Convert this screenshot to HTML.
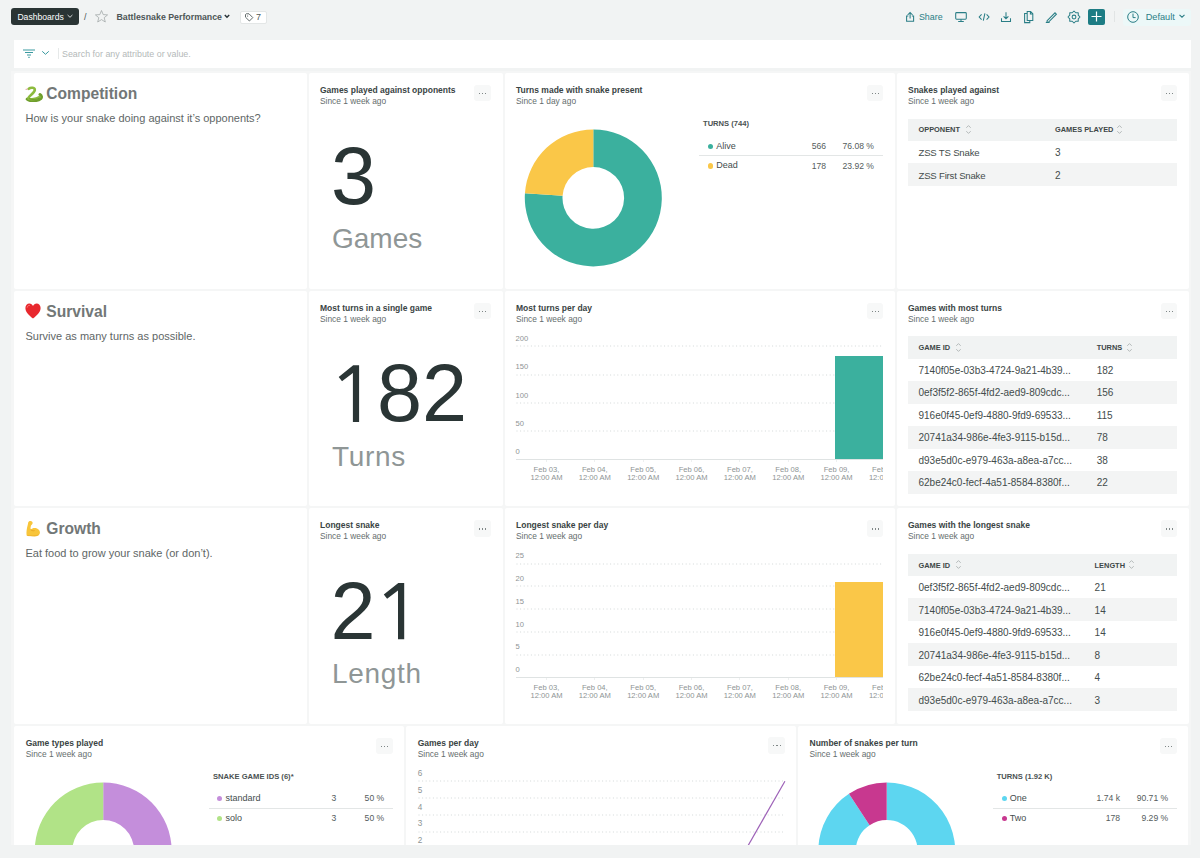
<!DOCTYPE html><html><head><meta charset="utf-8"><style>
html,body{margin:0;padding:0;}
body{width:1200px;height:858px;overflow:hidden;position:relative;background:#f1f3f3;font-family:"Liberation Sans", sans-serif;}
.t{position:absolute;white-space:nowrap;}
.r{position:absolute;}
</style></head><body>
<div class="r" style="left:11.00px;top:8.00px;width:68.00px;height:17.00px;background:#2a3434;border-radius:3px;"></div>
<div class="t" style="left:17.40px;top:12.69px;font-size:8.6px;line-height:8.6px;font-weight:400;color:#ffffff;">Dashboards</div>
<svg class="r" style="left:66px;top:13px;" width="8" height="6" viewBox="0 0 8 6"><path d="M1.6 2 L4 4.3 L6.4 2" fill="none" stroke="#e8eaea" stroke-width="0.9"/></svg>
<div class="t" style="left:84.00px;top:12.85px;font-size:9px;line-height:9px;font-weight:400;color:#4a5454;">/</div>
<svg class="r" style="left:94px;top:9px;" width="15" height="15" viewBox="0 0 15 15"><path d="M7.5 1.5 L9.2 5.6 L13.6 5.9 L10.2 8.7 L11.3 13 L7.5 10.6 L3.7 13 L4.8 8.7 L1.4 5.9 L5.8 5.6 Z" fill="none" stroke="#a3aaaa" stroke-width="0.8"/></svg>
<div class="t" style="left:116.40px;top:12.92px;font-size:8.8px;line-height:8.8px;font-weight:700;color:#4d5656;">Battlesnake Performance</div>
<svg class="r" style="left:223px;top:13px;" width="8" height="6" viewBox="0 0 8 6"><path d="M1.8 2 L4 4.2 L6.2 2" fill="none" stroke="#293338" stroke-width="1.5"/></svg>
<div class="r" style="left:240.00px;top:10.50px;width:27.00px;height:13.00px;background:#ffffff;border:1px solid #e3e6e6;box-sizing:border-box;border-radius:2px;"></div>
<svg class="r" style="left:244px;top:12px;" width="10" height="10" viewBox="0 0 10 10"><path d="M1.5 2.5 V5.2 L5.4 9 L8.8 5.6 L5 1.8 H2.2 Z" fill="none" stroke="#505a5a" stroke-width="0.9"/><circle cx="3.6" cy="4" r="0.6" fill="#505a5a"/></svg>
<div class="t" style="left:256.00px;top:12.85px;font-size:9px;line-height:9px;font-weight:400;color:#505a5a;">7</div>
<svg class="r" style="left:0;top:0" width="1200" height="40" viewBox="0 0 1200 40"><g fill="none" stroke="#2a7e86" stroke-width="1.05">
<path d="M910.1 12.6 V18.4 M907.6 15 L910.1 12.5 L912.6 15"/>
<path d="M908.3 15.9 H906.6 V21.3 H913.6 V15.9 H911.9"/>
<rect x="955.7" y="12.6" width="10.6" height="6.6" rx="0.9"/>
<path d="M961 19.2 V21.2 M958.2 21.4 H963.8"/>
<path d="M981.6 14.4 L979.2 17 L981.6 19.6 M986.6 14.4 L989 17 L986.6 19.6 M984.9 13.4 L983.3 20.6"/>
<path d="M1006 12.3 V18.6 M1003.6 16.3 L1006 18.7 L1008.4 16.3 M1001.5 18.2 V21.4 H1010.5 V18.2"/>
<path d="M1027.2 11.5 H1030.6 L1032.8 13.7 V20.5 H1027.2 Z M1030.4 11.5 V13.9 H1032.8 M1027 13.4 H1024.6 V22.6 H1029.8 V20.6"/>
<path d="M1047.2 20.6 L1055 12.8 L1056.4 14.2 L1048.6 22 L1046.9 22.3 Z"/>
<path d="M1045.8 22.5 H1049.6"/>
<path d="M1074.00 11.00 L1075.76 12.75 L1078.24 12.76 L1078.25 15.24 L1080.00 17.00 L1078.25 18.76 L1078.24 21.24 L1075.76 21.25 L1074.00 23.00 L1072.24 21.25 L1069.76 21.24 L1069.75 18.76 L1068.00 17.00 L1069.75 15.24 L1069.76 12.76 L1072.24 12.75 Z" stroke-linejoin="round"/>
<circle cx="1074" cy="17" r="1.9"/>
</g></svg>
<div class="t" style="left:918.90px;top:12.83px;font-size:8.9px;line-height:8.9px;font-weight:400;color:#2a7e86;">Share</div>
<div class="r" style="left:1088.00px;top:8.50px;width:16.50px;height:16.50px;background:#1d7c84;border-radius:2px;"></div>
<svg class="r" style="left:1088px;top:8px;" width="17" height="17" viewBox="0 0 17 17"><path d="M8.5 3.5 V13.5 M3.5 8.5 H13.5" stroke="#fff" stroke-width="1.2"/></svg>
<div class="r" style="left:1113.50px;top:11.20px;width:1.00px;height:11.20px;background:#e1e4e4;"></div>
<div class="r" style="left:1122.50px;top:8.50px;width:68.00px;height:17.00px;background:#ecf8f8;border-radius:3px;"></div>
<svg class="r" style="left:1126px;top:10px;" width="14" height="14" viewBox="0 0 14 14"><circle cx="7" cy="7" r="5.3" fill="none" stroke="#2a7e86" stroke-width="1"/><path d="M7 3.6 V7.6 H9.6" fill="none" stroke="#2a7e86" stroke-width="1"/></svg>
<div class="t" style="left:1145.70px;top:13.08px;font-size:9.2px;line-height:9.2px;font-weight:400;color:#2a7e86;">Default</div>
<svg class="r" style="left:1178px;top:13px;" width="8" height="6" viewBox="0 0 8 6"><path d="M1.5 1.8 L4 4.2 L6.5 1.8" fill="none" stroke="#2a7e86" stroke-width="1.1"/></svg>
<div class="r" style="left:14.00px;top:39.50px;width:1177.00px;height:28.20px;background:#ffffff;"></div>
<svg class="r" style="left:22px;top:49px;" width="14" height="10" viewBox="0 0 14 10"><path d="M1 1 H13 M3 3.5 H11 M5 6 H9 M6.2 8.3 H7.8" stroke="#3a9aa0" stroke-width="1"/></svg>
<svg class="r" style="left:41px;top:50px;" width="9" height="6" viewBox="0 0 9 6"><path d="M1.2 1.3 L4.5 4.3 L7.8 1.3" fill="none" stroke="#3a9aa0" stroke-width="1"/></svg>
<div class="r" style="left:57.50px;top:48.00px;width:1.00px;height:10.50px;background:#e6e9e9;"></div>
<div class="t" style="left:62.00px;top:49.64px;font-size:8.9px;line-height:8.9px;font-weight:400;color:#b4b9b9;">Search for any attribute or value.</div>
<div class="r" style="left:11.00px;top:70.50px;width:1180.00px;height:790.00px;background:#f5f6f6;"></div>
<div class="r" style="left:14.00px;top:73.00px;width:292.50px;height:216.00px;background:#ffffff;border-radius:2px;"></div>
<div class="r" style="left:308.50px;top:73.00px;width:194.00px;height:216.00px;background:#ffffff;border-radius:2px;"></div>
<div class="r" style="left:504.50px;top:73.00px;width:390.00px;height:216.00px;background:#ffffff;border-radius:2px;"></div>
<div class="r" style="left:896.50px;top:73.00px;width:292.50px;height:216.00px;background:#ffffff;border-radius:2px;"></div>
<div class="r" style="left:14.00px;top:291.00px;width:292.50px;height:215.30px;background:#ffffff;border-radius:2px;"></div>
<div class="r" style="left:308.50px;top:291.00px;width:194.00px;height:215.30px;background:#ffffff;border-radius:2px;"></div>
<div class="r" style="left:504.50px;top:291.00px;width:390.00px;height:215.30px;background:#ffffff;border-radius:2px;"></div>
<div class="r" style="left:896.50px;top:291.00px;width:292.50px;height:215.30px;background:#ffffff;border-radius:2px;"></div>
<div class="r" style="left:14.00px;top:508.40px;width:292.50px;height:215.60px;background:#ffffff;border-radius:2px;"></div>
<div class="r" style="left:308.50px;top:508.40px;width:194.00px;height:215.60px;background:#ffffff;border-radius:2px;"></div>
<div class="r" style="left:504.50px;top:508.40px;width:390.00px;height:215.60px;background:#ffffff;border-radius:2px;"></div>
<div class="r" style="left:896.50px;top:508.40px;width:292.50px;height:215.60px;background:#ffffff;border-radius:2px;"></div>
<div class="r" style="left:14.00px;top:726.00px;width:390.40px;height:200.00px;background:#ffffff;border-radius:2px;"></div>
<div class="r" style="left:406.40px;top:726.00px;width:390.00px;height:200.00px;background:#ffffff;border-radius:2px;"></div>
<div class="r" style="left:798.40px;top:726.00px;width:389.60px;height:200.00px;background:#ffffff;border-radius:2px;"></div>
<svg class="r" style="left:25.3px;top:86px;" width="18" height="16" viewBox="0 0 18 16"><path d="M2.2 13.2 C5 15.6 12.5 15.2 15.8 12.6 C17 11.4 16.6 9.6 15 8.6" fill="none" stroke="#6f9e2c" stroke-width="3" stroke-linecap="round"/>
<path d="M3.8 2.8 C6 1 10 1.6 9.8 4.2 C9.6 6.8 5.2 9 3.6 11.6 C3 12.8 4.5 13.4 7 13.2 C10 13 13 12.2 14.5 11" fill="none" stroke="#8dbb3e" stroke-width="2.6" stroke-linecap="round"/>
<path d="M4.2 12.6 C7 14 11.5 13.8 14.8 12" fill="none" stroke="#5e8a22" stroke-width="0.9" opacity="0.7"/>
<path d="M0.6 3.4 L2.8 3.1" stroke="#d06060" stroke-width="0.6"/></svg>
<div class="t" style="left:46.30px;top:85.94px;font-size:15.6px;line-height:15.6px;font-weight:700;color:#727777;">Competition</div>
<div class="t" style="left:25.50px;top:112.95px;font-size:11px;line-height:11px;font-weight:400;color:#606666;">How is your snake doing against it’s opponents?</div>
<svg class="r" style="left:25.3px;top:302.5px;" width="16" height="16" viewBox="0 0 16 16"><path d="M8 15.6 C3.2 11.8 0.4 8.6 0.4 5 C0.4 2.5 2.2 0.6 4.4 0.6 C6 0.6 7.3 1.6 8 2.9 C8.7 1.6 10 0.6 11.6 0.6 C13.8 0.6 15.6 2.5 15.6 5 C15.6 8.6 12.8 11.8 8 15.6 Z" fill="#e8282e"/><path d="M2.2 4.6 C2.4 3 3.6 2.2 4.8 2.4" fill="none" stroke="#ff8a8a" stroke-width="1" opacity="0.8"/></svg>
<div class="t" style="left:46.30px;top:303.94px;font-size:15.6px;line-height:15.6px;font-weight:700;color:#727777;">Survival</div>
<div class="t" style="left:25.50px;top:330.95px;font-size:11px;line-height:11px;font-weight:400;color:#606666;">Survive as many turns as possible.</div>
<svg class="r" style="left:25.3px;top:520.4px;" width="16" height="17" viewBox="0 0 16 17"><path d="M1.6 15.6 C1.2 12 1.8 8.5 2.6 5.6 C2.9 4.5 3 3.6 3.2 2.6 C3.4 1.4 4.4 0.8 5.6 0.9 C6.9 1 7.8 1.8 7.6 3.2 C7.4 4.2 6.6 4.8 6 5.4 C5.6 6.8 5.4 8.2 5.6 9.6 C7 8 9.8 7.6 12 8.4 C14.4 9.3 15.4 11.6 14.8 13.6 C14.2 15.6 12 16.4 9.5 16.4 C6.5 16.4 3.5 16.4 1.6 15.6 Z" fill="#f8c53a"/><path d="M5.6 9.6 C6.6 10.6 8 11 9.6 10.6" fill="none" stroke="#e19a18" stroke-width="0.7"/><path d="M2 15.4 C5 16 10 16 13.6 15" fill="none" stroke="#e8a520" stroke-width="0.8" opacity="0.6"/></svg>
<div class="t" style="left:46.30px;top:521.34px;font-size:15.6px;line-height:15.6px;font-weight:700;color:#727777;">Growth</div>
<div class="t" style="left:25.50px;top:548.35px;font-size:11px;line-height:11px;font-weight:400;color:#606666;">Eat food to grow your snake (or don’t).</div>
<div class="t" style="left:320.00px;top:85.78px;font-size:8.5px;line-height:8.5px;font-weight:700;color:#3a4444;">Games played against opponents</div>
<div class="t" style="left:320.00px;top:96.66px;font-size:8.4px;line-height:8.4px;font-weight:400;color:#656d6d;">Since 1 week ago</div>
<div class="r" style="left:474.00px;top:85.00px;width:16.60px;height:16.30px;background:#f7f8f8;border-radius:3px;"></div>
<div class="r" style="left:478.90px;top:93.00px;width:1.20px;height:1.20px;background:#7f8787;"></div>
<div class="r" style="left:482.00px;top:93.00px;width:1.20px;height:1.20px;background:#7f8787;"></div>
<div class="r" style="left:485.10px;top:93.00px;width:1.20px;height:1.20px;background:#7f8787;"></div>
<div class="t" style="left:332.00px;top:224.50px;font-size:28px;line-height:28px;font-weight:400;color:#8f9696;">Games</div>
<div class="t" style="left:320.00px;top:303.77px;font-size:8.5px;line-height:8.5px;font-weight:700;color:#3a4444;">Most turns in a single game</div>
<div class="t" style="left:320.00px;top:314.66px;font-size:8.4px;line-height:8.4px;font-weight:400;color:#656d6d;">Since 1 week ago</div>
<div class="r" style="left:474.00px;top:303.00px;width:16.60px;height:16.30px;background:#f7f8f8;border-radius:3px;"></div>
<div class="r" style="left:478.90px;top:311.00px;width:1.20px;height:1.20px;background:#7f8787;"></div>
<div class="r" style="left:482.00px;top:311.00px;width:1.20px;height:1.20px;background:#7f8787;"></div>
<div class="r" style="left:485.10px;top:311.00px;width:1.20px;height:1.20px;background:#7f8787;"></div>
<div class="t" style="left:332.00px;top:442.50px;font-size:28px;line-height:28px;font-weight:400;color:#8f9696;letter-spacing:0.7px;">Turns</div>
<div class="t" style="left:320.00px;top:521.17px;font-size:8.5px;line-height:8.5px;font-weight:700;color:#3a4444;">Longest snake</div>
<div class="t" style="left:320.00px;top:532.06px;font-size:8.4px;line-height:8.4px;font-weight:400;color:#656d6d;">Since 1 week ago</div>
<div class="r" style="left:474.00px;top:520.40px;width:16.60px;height:16.30px;background:#f7f8f8;border-radius:3px;"></div>
<div class="r" style="left:478.90px;top:528.40px;width:1.20px;height:1.20px;background:#7f8787;"></div>
<div class="r" style="left:482.00px;top:528.40px;width:1.20px;height:1.20px;background:#7f8787;"></div>
<div class="r" style="left:485.10px;top:528.40px;width:1.20px;height:1.20px;background:#7f8787;"></div>
<div class="t" style="left:332.00px;top:659.90px;font-size:28px;line-height:28px;font-weight:400;color:#8f9696;letter-spacing:0.7px;">Length</div>
<div class="t" style="left:331.00px;top:135.50px;font-size:81px;line-height:81px;font-weight:400;color:#2a3535;">3</div>
<div class="t" style="left:377.00px;top:353.30px;font-size:81px;line-height:81px;font-weight:400;color:#2a3535;">82</div>
<svg class="r" style="left:0;top:0" width="1200" height="858" viewBox="0 0 1200 858"><path d="M353.20 365.30 L359.10 365.30 L359.10 421.90 L352.90 421.90 L352.90 372.90 L342.00 381.20 L338.70 377.00 Z" fill="#2a3535"/></svg>
<div class="t" style="left:330.50px;top:570.80px;font-size:81px;line-height:81px;font-weight:400;color:#2a3535;">2</div>
<svg class="r" style="left:0;top:0" width="1200" height="858" viewBox="0 0 1200 858"><path d="M398.30 582.90 L404.20 582.90 L404.20 639.30 L398.00 639.30 L398.00 590.50 L387.10 598.80 L383.80 594.60 Z" fill="#2a3535"/></svg>
<div class="t" style="left:516.00px;top:85.78px;font-size:8.5px;line-height:8.5px;font-weight:700;color:#3a4444;">Turns made with snake present</div>
<div class="t" style="left:516.00px;top:96.66px;font-size:8.4px;line-height:8.4px;font-weight:400;color:#656d6d;">Since 1 day ago</div>
<div class="r" style="left:866.70px;top:85.00px;width:16.60px;height:16.30px;background:#f7f8f8;border-radius:3px;"></div>
<div class="r" style="left:871.60px;top:93.00px;width:1.20px;height:1.20px;background:#7f8787;"></div>
<div class="r" style="left:874.70px;top:93.00px;width:1.20px;height:1.20px;background:#7f8787;"></div>
<div class="r" style="left:877.80px;top:93.00px;width:1.20px;height:1.20px;background:#7f8787;"></div>
<svg class="r" style="left:0;top:0" width="1200" height="858" viewBox="0 0 1200 858"><path d="M593.30 129.40 A68.5 68.5 0 1 1 524.96 193.26 L562.57 195.81 A30.8 30.8 0 1 0 593.30 167.10 Z" fill="#3bb09e"/><path d="M524.96 193.26 A68.5 68.5 0 0 1 593.30 129.40 L593.30 167.10 A30.8 30.8 0 0 0 562.57 195.81 Z" fill="#fac748"/></svg>
<div class="t" style="left:703.00px;top:120.24px;font-size:7.6px;line-height:7.6px;font-weight:700;color:#4a5252;">TURNS (744)</div>
<div class="r" style="left:707.60px;top:143.90px;width:5.40px;height:5.40px;background:#3bb09e;border-radius:50%;"></div>
<div class="t" style="left:716.30px;top:141.95px;font-size:9px;line-height:9px;font-weight:400;color:#444d4d;">Alive</div>
<div class="t" style="right:374.00px;text-align:right;top:142.29px;font-size:8.6px;line-height:8.6px;font-weight:400;color:#555d5d;">566</div>
<div class="t" style="right:326.00px;text-align:right;top:142.29px;font-size:8.6px;line-height:8.6px;font-weight:400;color:#555d5d;">76.08 %</div>
<div class="r" style="left:699.00px;top:155.20px;width:184.00px;height:1.00px;background:#e3e6e6;"></div>
<div class="r" style="left:707.60px;top:163.20px;width:5.40px;height:5.40px;background:#fac748;border-radius:50%;"></div>
<div class="t" style="left:716.30px;top:161.25px;font-size:9px;line-height:9px;font-weight:400;color:#444d4d;">Dead</div>
<div class="t" style="right:374.00px;text-align:right;top:161.59px;font-size:8.6px;line-height:8.6px;font-weight:400;color:#555d5d;">178</div>
<div class="t" style="right:326.00px;text-align:right;top:161.59px;font-size:8.6px;line-height:8.6px;font-weight:400;color:#555d5d;">23.92 %</div>
<div class="t" style="left:908.00px;top:85.78px;font-size:8.5px;line-height:8.5px;font-weight:700;color:#3a4444;">Snakes played against</div>
<div class="t" style="left:908.00px;top:96.66px;font-size:8.4px;line-height:8.4px;font-weight:400;color:#656d6d;">Since 1 week ago</div>
<div class="r" style="left:1160.70px;top:85.00px;width:16.60px;height:16.30px;background:#f7f8f8;border-radius:3px;"></div>
<div class="r" style="left:1165.60px;top:93.00px;width:1.20px;height:1.20px;background:#7f8787;"></div>
<div class="r" style="left:1168.70px;top:93.00px;width:1.20px;height:1.20px;background:#7f8787;"></div>
<div class="r" style="left:1171.80px;top:93.00px;width:1.20px;height:1.20px;background:#7f8787;"></div>
<div class="r" style="left:908.00px;top:118.50px;width:269.30px;height:22.20px;background:#f1f3f3;"></div>
<div class="t" style="left:918.50px;top:126.31px;font-size:7.4px;line-height:7.4px;font-weight:700;color:#3e4747;">OPPONENT</div>
<svg class="r" style="left:965px;top:124px;" width="7" height="11" viewBox="0 0 7 11"><path d="M1.3 3.8 L3.5 1.6 L5.7 3.8 M1.3 7.2 L3.5 9.4 L5.7 7.2" fill="none" stroke="#a3aaaa" stroke-width="0.8"/></svg>
<div class="t" style="left:1055.00px;top:126.31px;font-size:7.4px;line-height:7.4px;font-weight:700;color:#3e4747;">GAMES PLAYED</div>
<svg class="r" style="left:1116px;top:124px;" width="7" height="11" viewBox="0 0 7 11"><path d="M1.3 3.8 L3.5 1.6 L5.7 3.8 M1.3 7.2 L3.5 9.4 L5.7 7.2" fill="none" stroke="#a3aaaa" stroke-width="0.8"/></svg>
<div class="t" style="left:918.50px;top:148.44px;font-size:9.6px;line-height:9.6px;font-weight:400;color:#434c4c;letter-spacing:-0.2px;">ZSS TS Snake</div>
<div class="t" style="left:1055.00px;top:148.10px;font-size:10px;line-height:10px;font-weight:400;color:#434c4c;">3</div>
<div class="r" style="left:908.00px;top:163.20px;width:269.30px;height:22.50px;background:#f3f4f4;"></div>
<div class="t" style="left:918.50px;top:170.94px;font-size:9.6px;line-height:9.6px;font-weight:400;color:#434c4c;letter-spacing:-0.2px;">ZSS First Snake</div>
<div class="t" style="left:1055.00px;top:170.60px;font-size:10px;line-height:10px;font-weight:400;color:#434c4c;">2</div>
<div class="t" style="left:516.00px;top:303.77px;font-size:8.5px;line-height:8.5px;font-weight:700;color:#3a4444;">Most turns per day</div>
<div class="t" style="left:516.00px;top:314.66px;font-size:8.4px;line-height:8.4px;font-weight:400;color:#656d6d;">Since 1 week ago</div>
<div class="r" style="left:866.70px;top:303.00px;width:16.60px;height:16.30px;background:#f7f8f8;border-radius:3px;"></div>
<div class="r" style="left:871.60px;top:311.00px;width:1.20px;height:1.20px;background:#7f8787;"></div>
<div class="r" style="left:874.70px;top:311.00px;width:1.20px;height:1.20px;background:#7f8787;"></div>
<div class="r" style="left:877.80px;top:311.00px;width:1.20px;height:1.20px;background:#7f8787;"></div>
<div class="t" style="left:515.60px;top:335.24px;font-size:7.6px;line-height:7.6px;font-weight:400;color:#8e9494;">200</div>
<svg class="r" style="left:516px;top:345.40px" width="367" height="2"><line x1="0.5" y1="1" x2="367" y2="1" stroke="#d3d8d8" stroke-width="1" stroke-dasharray="1 2.6"/></svg>
<div class="t" style="left:515.60px;top:363.44px;font-size:7.6px;line-height:7.6px;font-weight:400;color:#8e9494;">150</div>
<svg class="r" style="left:516px;top:373.60px" width="367" height="2"><line x1="0.5" y1="1" x2="367" y2="1" stroke="#d3d8d8" stroke-width="1" stroke-dasharray="1 2.6"/></svg>
<div class="t" style="left:515.60px;top:391.64px;font-size:7.6px;line-height:7.6px;font-weight:400;color:#8e9494;">100</div>
<svg class="r" style="left:516px;top:401.80px" width="367" height="2"><line x1="0.5" y1="1" x2="367" y2="1" stroke="#d3d8d8" stroke-width="1" stroke-dasharray="1 2.6"/></svg>
<div class="t" style="left:515.60px;top:419.84px;font-size:7.6px;line-height:7.6px;font-weight:400;color:#8e9494;">50</div>
<svg class="r" style="left:516px;top:430.00px" width="367" height="2"><line x1="0.5" y1="1" x2="367" y2="1" stroke="#d3d8d8" stroke-width="1" stroke-dasharray="1 2.6"/></svg>
<div class="t" style="left:515.60px;top:448.14px;font-size:7.6px;line-height:7.6px;font-weight:400;color:#8e9494;">0</div>
<div class="r" style="left:516.00px;top:458.80px;width:367.00px;height:1.00px;background:#dfe3e3;"></div>
<div class="r" style="left:835.00px;top:355.70px;width:47.70px;height:103.60px;background:#3bb09e;"></div>
<div class="r" style="left:505px;top:459.3px;width:378px;height:40px;overflow:hidden">
<div class="r" style="left:41.00px;top:1.00px;width:1.00px;height:2.00px;background:#eef0f0;"></div>
<div class="t" style="left:11.50px;width:60px;text-align:center;top:6.84px;font-size:7.6px;line-height:7.6px;color:#8e9494">Feb 03,</div>
<div class="t" style="left:11.50px;width:60px;text-align:center;top:14.24px;font-size:7.6px;line-height:7.6px;color:#8e9494">12:00 AM</div>
<div class="r" style="left:89.35px;top:1.00px;width:1.00px;height:2.00px;background:#eef0f0;"></div>
<div class="t" style="left:59.85px;width:60px;text-align:center;top:6.84px;font-size:7.6px;line-height:7.6px;color:#8e9494">Feb 04,</div>
<div class="t" style="left:59.85px;width:60px;text-align:center;top:14.24px;font-size:7.6px;line-height:7.6px;color:#8e9494">12:00 AM</div>
<div class="r" style="left:137.70px;top:1.00px;width:1.00px;height:2.00px;background:#eef0f0;"></div>
<div class="t" style="left:108.20px;width:60px;text-align:center;top:6.84px;font-size:7.6px;line-height:7.6px;color:#8e9494">Feb 05,</div>
<div class="t" style="left:108.20px;width:60px;text-align:center;top:14.24px;font-size:7.6px;line-height:7.6px;color:#8e9494">12:00 AM</div>
<div class="r" style="left:186.05px;top:1.00px;width:1.00px;height:2.00px;background:#eef0f0;"></div>
<div class="t" style="left:156.55px;width:60px;text-align:center;top:6.84px;font-size:7.6px;line-height:7.6px;color:#8e9494">Feb 06,</div>
<div class="t" style="left:156.55px;width:60px;text-align:center;top:14.24px;font-size:7.6px;line-height:7.6px;color:#8e9494">12:00 AM</div>
<div class="r" style="left:234.40px;top:1.00px;width:1.00px;height:2.00px;background:#eef0f0;"></div>
<div class="t" style="left:204.90px;width:60px;text-align:center;top:6.84px;font-size:7.6px;line-height:7.6px;color:#8e9494">Feb 07,</div>
<div class="t" style="left:204.90px;width:60px;text-align:center;top:14.24px;font-size:7.6px;line-height:7.6px;color:#8e9494">12:00 AM</div>
<div class="r" style="left:282.75px;top:1.00px;width:1.00px;height:2.00px;background:#eef0f0;"></div>
<div class="t" style="left:253.25px;width:60px;text-align:center;top:6.84px;font-size:7.6px;line-height:7.6px;color:#8e9494">Feb 08,</div>
<div class="t" style="left:253.25px;width:60px;text-align:center;top:14.24px;font-size:7.6px;line-height:7.6px;color:#8e9494">12:00 AM</div>
<div class="r" style="left:331.10px;top:1.00px;width:1.00px;height:2.00px;background:#eef0f0;"></div>
<div class="t" style="left:301.60px;width:60px;text-align:center;top:6.84px;font-size:7.6px;line-height:7.6px;color:#8e9494">Feb 09,</div>
<div class="t" style="left:301.60px;width:60px;text-align:center;top:14.24px;font-size:7.6px;line-height:7.6px;color:#8e9494">12:00 AM</div>
<div class="r" style="left:379.45px;top:1.00px;width:1.00px;height:2.00px;background:#eef0f0;"></div>
<div class="t" style="left:349.95px;width:60px;text-align:center;top:6.84px;font-size:7.6px;line-height:7.6px;color:#8e9494">Feb 10,</div>
<div class="t" style="left:349.95px;width:60px;text-align:center;top:14.24px;font-size:7.6px;line-height:7.6px;color:#8e9494">12:00 AM</div>
</div>
<div class="t" style="left:516.00px;top:521.17px;font-size:8.5px;line-height:8.5px;font-weight:700;color:#3a4444;">Longest snake per day</div>
<div class="t" style="left:516.00px;top:532.06px;font-size:8.4px;line-height:8.4px;font-weight:400;color:#656d6d;">Since 1 week ago</div>
<div class="r" style="left:866.70px;top:520.40px;width:16.60px;height:16.30px;background:#f7f8f8;border-radius:3px;"></div>
<div class="r" style="left:871.60px;top:528.40px;width:1.20px;height:1.20px;background:#7f8787;"></div>
<div class="r" style="left:874.70px;top:528.40px;width:1.20px;height:1.20px;background:#7f8787;"></div>
<div class="r" style="left:877.80px;top:528.40px;width:1.20px;height:1.20px;background:#7f8787;"></div>
<div class="t" style="left:515.60px;top:552.44px;font-size:7.6px;line-height:7.6px;font-weight:400;color:#8e9494;">25</div>
<svg class="r" style="left:516px;top:562.60px" width="367" height="2"><line x1="0.5" y1="1" x2="367" y2="1" stroke="#d3d8d8" stroke-width="1" stroke-dasharray="1 2.6"/></svg>
<div class="t" style="left:515.60px;top:575.24px;font-size:7.6px;line-height:7.6px;font-weight:400;color:#8e9494;">20</div>
<svg class="r" style="left:516px;top:585.40px" width="367" height="2"><line x1="0.5" y1="1" x2="367" y2="1" stroke="#d3d8d8" stroke-width="1" stroke-dasharray="1 2.6"/></svg>
<div class="t" style="left:515.60px;top:598.04px;font-size:7.6px;line-height:7.6px;font-weight:400;color:#8e9494;">15</div>
<svg class="r" style="left:516px;top:608.20px" width="367" height="2"><line x1="0.5" y1="1" x2="367" y2="1" stroke="#d3d8d8" stroke-width="1" stroke-dasharray="1 2.6"/></svg>
<div class="t" style="left:515.60px;top:620.84px;font-size:7.6px;line-height:7.6px;font-weight:400;color:#8e9494;">10</div>
<svg class="r" style="left:516px;top:631.00px" width="367" height="2"><line x1="0.5" y1="1" x2="367" y2="1" stroke="#d3d8d8" stroke-width="1" stroke-dasharray="1 2.6"/></svg>
<div class="t" style="left:515.60px;top:643.44px;font-size:7.6px;line-height:7.6px;font-weight:400;color:#8e9494;">5</div>
<svg class="r" style="left:516px;top:653.60px" width="367" height="2"><line x1="0.5" y1="1" x2="367" y2="1" stroke="#d3d8d8" stroke-width="1" stroke-dasharray="1 2.6"/></svg>
<div class="t" style="left:515.60px;top:666.24px;font-size:7.6px;line-height:7.6px;font-weight:400;color:#8e9494;">0</div>
<div class="r" style="left:516.00px;top:676.90px;width:367.00px;height:1.00px;background:#dfe3e3;"></div>
<div class="r" style="left:835.00px;top:581.90px;width:47.70px;height:95.50px;background:#fac748;"></div>
<div class="r" style="left:505px;top:677.4px;width:378px;height:40px;overflow:hidden">
<div class="r" style="left:41.00px;top:1.00px;width:1.00px;height:2.00px;background:#eef0f0;"></div>
<div class="t" style="left:11.50px;width:60px;text-align:center;top:6.84px;font-size:7.6px;line-height:7.6px;color:#8e9494">Feb 03,</div>
<div class="t" style="left:11.50px;width:60px;text-align:center;top:14.24px;font-size:7.6px;line-height:7.6px;color:#8e9494">12:00 AM</div>
<div class="r" style="left:89.35px;top:1.00px;width:1.00px;height:2.00px;background:#eef0f0;"></div>
<div class="t" style="left:59.85px;width:60px;text-align:center;top:6.84px;font-size:7.6px;line-height:7.6px;color:#8e9494">Feb 04,</div>
<div class="t" style="left:59.85px;width:60px;text-align:center;top:14.24px;font-size:7.6px;line-height:7.6px;color:#8e9494">12:00 AM</div>
<div class="r" style="left:137.70px;top:1.00px;width:1.00px;height:2.00px;background:#eef0f0;"></div>
<div class="t" style="left:108.20px;width:60px;text-align:center;top:6.84px;font-size:7.6px;line-height:7.6px;color:#8e9494">Feb 05,</div>
<div class="t" style="left:108.20px;width:60px;text-align:center;top:14.24px;font-size:7.6px;line-height:7.6px;color:#8e9494">12:00 AM</div>
<div class="r" style="left:186.05px;top:1.00px;width:1.00px;height:2.00px;background:#eef0f0;"></div>
<div class="t" style="left:156.55px;width:60px;text-align:center;top:6.84px;font-size:7.6px;line-height:7.6px;color:#8e9494">Feb 06,</div>
<div class="t" style="left:156.55px;width:60px;text-align:center;top:14.24px;font-size:7.6px;line-height:7.6px;color:#8e9494">12:00 AM</div>
<div class="r" style="left:234.40px;top:1.00px;width:1.00px;height:2.00px;background:#eef0f0;"></div>
<div class="t" style="left:204.90px;width:60px;text-align:center;top:6.84px;font-size:7.6px;line-height:7.6px;color:#8e9494">Feb 07,</div>
<div class="t" style="left:204.90px;width:60px;text-align:center;top:14.24px;font-size:7.6px;line-height:7.6px;color:#8e9494">12:00 AM</div>
<div class="r" style="left:282.75px;top:1.00px;width:1.00px;height:2.00px;background:#eef0f0;"></div>
<div class="t" style="left:253.25px;width:60px;text-align:center;top:6.84px;font-size:7.6px;line-height:7.6px;color:#8e9494">Feb 08,</div>
<div class="t" style="left:253.25px;width:60px;text-align:center;top:14.24px;font-size:7.6px;line-height:7.6px;color:#8e9494">12:00 AM</div>
<div class="r" style="left:331.10px;top:1.00px;width:1.00px;height:2.00px;background:#eef0f0;"></div>
<div class="t" style="left:301.60px;width:60px;text-align:center;top:6.84px;font-size:7.6px;line-height:7.6px;color:#8e9494">Feb 09,</div>
<div class="t" style="left:301.60px;width:60px;text-align:center;top:14.24px;font-size:7.6px;line-height:7.6px;color:#8e9494">12:00 AM</div>
<div class="r" style="left:379.45px;top:1.00px;width:1.00px;height:2.00px;background:#eef0f0;"></div>
<div class="t" style="left:349.95px;width:60px;text-align:center;top:6.84px;font-size:7.6px;line-height:7.6px;color:#8e9494">Feb 10,</div>
<div class="t" style="left:349.95px;width:60px;text-align:center;top:14.24px;font-size:7.6px;line-height:7.6px;color:#8e9494">12:00 AM</div>
</div>
<div class="t" style="left:908.00px;top:303.77px;font-size:8.5px;line-height:8.5px;font-weight:700;color:#3a4444;">Games with most turns</div>
<div class="t" style="left:908.00px;top:314.66px;font-size:8.4px;line-height:8.4px;font-weight:400;color:#656d6d;">Since 1 week ago</div>
<div class="r" style="left:1160.70px;top:303.00px;width:16.60px;height:16.30px;background:#f7f8f8;border-radius:3px;"></div>
<div class="r" style="left:1165.60px;top:311.00px;width:1.20px;height:1.20px;background:#7f8787;"></div>
<div class="r" style="left:1168.70px;top:311.00px;width:1.20px;height:1.20px;background:#7f8787;"></div>
<div class="r" style="left:1171.80px;top:311.00px;width:1.20px;height:1.20px;background:#7f8787;"></div>
<div class="r" style="left:908.00px;top:336.00px;width:269.30px;height:22.50px;background:#f1f3f3;"></div>
<div class="t" style="left:918.50px;top:343.81px;font-size:7.4px;line-height:7.4px;font-weight:700;color:#3e4747;">GAME ID</div>
<svg class="r" style="left:955px;top:342px;" width="7" height="11" viewBox="0 0 7 11"><path d="M1.3 3.8 L3.5 1.6 L5.7 3.8 M1.3 7.2 L3.5 9.4 L5.7 7.2" fill="none" stroke="#a3aaaa" stroke-width="0.8"/></svg>
<div class="t" style="left:1096.70px;top:343.81px;font-size:7.4px;line-height:7.4px;font-weight:700;color:#3e4747;">TURNS</div>
<svg class="r" style="left:1126px;top:342px;" width="7" height="11" viewBox="0 0 7 11"><path d="M1.3 3.8 L3.5 1.6 L5.7 3.8 M1.3 7.2 L3.5 9.4 L5.7 7.2" fill="none" stroke="#a3aaaa" stroke-width="0.8"/></svg>
<div class="t" style="left:918.50px;top:365.90px;font-size:10px;line-height:10px;font-weight:400;color:#434c4c;">7140f05e-03b3-4724-9a21-4b39...</div>
<div class="t" style="left:1096.70px;top:365.90px;font-size:10px;line-height:10px;font-weight:400;color:#434c4c;">182</div>
<div class="r" style="left:908.00px;top:381.00px;width:269.30px;height:22.50px;background:#f3f4f4;"></div>
<div class="t" style="left:918.50px;top:388.40px;font-size:10px;line-height:10px;font-weight:400;color:#434c4c;">0ef3f5f2-865f-4fd2-aed9-809cdc...</div>
<div class="t" style="left:1096.70px;top:388.40px;font-size:10px;line-height:10px;font-weight:400;color:#434c4c;">156</div>
<div class="t" style="left:918.50px;top:410.90px;font-size:10px;line-height:10px;font-weight:400;color:#434c4c;">916e0f45-0ef9-4880-9fd9-69533...</div>
<div class="t" style="left:1096.70px;top:410.90px;font-size:10px;line-height:10px;font-weight:400;color:#434c4c;">115</div>
<div class="r" style="left:908.00px;top:426.00px;width:269.30px;height:22.50px;background:#f3f4f4;"></div>
<div class="t" style="left:918.50px;top:433.40px;font-size:10px;line-height:10px;font-weight:400;color:#434c4c;">20741a34-986e-4fe3-9115-b15d...</div>
<div class="t" style="left:1096.70px;top:433.40px;font-size:10px;line-height:10px;font-weight:400;color:#434c4c;">78</div>
<div class="t" style="left:918.50px;top:455.90px;font-size:10px;line-height:10px;font-weight:400;color:#434c4c;">d93e5d0c-e979-463a-a8ea-a7cc...</div>
<div class="t" style="left:1096.70px;top:455.90px;font-size:10px;line-height:10px;font-weight:400;color:#434c4c;">38</div>
<div class="r" style="left:908.00px;top:471.00px;width:269.30px;height:22.50px;background:#f3f4f4;"></div>
<div class="t" style="left:918.50px;top:478.40px;font-size:10px;line-height:10px;font-weight:400;color:#434c4c;">62be24c0-fecf-4a51-8584-8380f...</div>
<div class="t" style="left:1096.70px;top:478.40px;font-size:10px;line-height:10px;font-weight:400;color:#434c4c;">22</div>
<div class="t" style="left:908.00px;top:521.17px;font-size:8.5px;line-height:8.5px;font-weight:700;color:#3a4444;">Games with the longest snake</div>
<div class="t" style="left:908.00px;top:532.06px;font-size:8.4px;line-height:8.4px;font-weight:400;color:#656d6d;">Since 1 week ago</div>
<div class="r" style="left:1160.70px;top:520.40px;width:16.60px;height:16.30px;background:#f7f8f8;border-radius:3px;"></div>
<div class="r" style="left:1165.60px;top:528.40px;width:1.20px;height:1.20px;background:#7f8787;"></div>
<div class="r" style="left:1168.70px;top:528.40px;width:1.20px;height:1.20px;background:#7f8787;"></div>
<div class="r" style="left:1171.80px;top:528.40px;width:1.20px;height:1.20px;background:#7f8787;"></div>
<div class="r" style="left:908.00px;top:553.80px;width:269.30px;height:22.00px;background:#f1f3f3;"></div>
<div class="t" style="left:918.50px;top:561.61px;font-size:7.4px;line-height:7.4px;font-weight:700;color:#3e4747;">GAME ID</div>
<svg class="r" style="left:955px;top:559px;" width="7" height="11" viewBox="0 0 7 11"><path d="M1.3 3.8 L3.5 1.6 L5.7 3.8 M1.3 7.2 L3.5 9.4 L5.7 7.2" fill="none" stroke="#a3aaaa" stroke-width="0.8"/></svg>
<div class="t" style="left:1094.60px;top:561.61px;font-size:7.4px;line-height:7.4px;font-weight:700;color:#3e4747;">LENGTH</div>
<svg class="r" style="left:1128px;top:559px;" width="7" height="11" viewBox="0 0 7 11"><path d="M1.3 3.8 L3.5 1.6 L5.7 3.8 M1.3 7.2 L3.5 9.4 L5.7 7.2" fill="none" stroke="#a3aaaa" stroke-width="0.8"/></svg>
<div class="t" style="left:918.50px;top:583.20px;font-size:10px;line-height:10px;font-weight:400;color:#434c4c;">0ef3f5f2-865f-4fd2-aed9-809cdc...</div>
<div class="t" style="left:1094.60px;top:583.20px;font-size:10px;line-height:10px;font-weight:400;color:#434c4c;">21</div>
<div class="r" style="left:908.00px;top:598.30px;width:269.30px;height:22.50px;background:#f3f4f4;"></div>
<div class="t" style="left:918.50px;top:605.70px;font-size:10px;line-height:10px;font-weight:400;color:#434c4c;">7140f05e-03b3-4724-9a21-4b39...</div>
<div class="t" style="left:1094.60px;top:605.70px;font-size:10px;line-height:10px;font-weight:400;color:#434c4c;">14</div>
<div class="t" style="left:918.50px;top:628.20px;font-size:10px;line-height:10px;font-weight:400;color:#434c4c;">916e0f45-0ef9-4880-9fd9-69533...</div>
<div class="t" style="left:1094.60px;top:628.20px;font-size:10px;line-height:10px;font-weight:400;color:#434c4c;">14</div>
<div class="r" style="left:908.00px;top:643.30px;width:269.30px;height:22.50px;background:#f3f4f4;"></div>
<div class="t" style="left:918.50px;top:650.70px;font-size:10px;line-height:10px;font-weight:400;color:#434c4c;">20741a34-986e-4fe3-9115-b15d...</div>
<div class="t" style="left:1094.60px;top:650.70px;font-size:10px;line-height:10px;font-weight:400;color:#434c4c;">8</div>
<div class="t" style="left:918.50px;top:673.20px;font-size:10px;line-height:10px;font-weight:400;color:#434c4c;">62be24c0-fecf-4a51-8584-8380f...</div>
<div class="t" style="left:1094.60px;top:673.20px;font-size:10px;line-height:10px;font-weight:400;color:#434c4c;">4</div>
<div class="r" style="left:908.00px;top:688.30px;width:269.30px;height:22.50px;background:#f3f4f4;"></div>
<div class="t" style="left:918.50px;top:695.70px;font-size:10px;line-height:10px;font-weight:400;color:#434c4c;">d93e5d0c-e979-463a-a8ea-a7cc...</div>
<div class="t" style="left:1094.60px;top:695.70px;font-size:10px;line-height:10px;font-weight:400;color:#434c4c;">3</div>
<div class="t" style="left:25.70px;top:738.77px;font-size:8.5px;line-height:8.5px;font-weight:700;color:#3a4444;">Game types played</div>
<div class="t" style="left:25.70px;top:749.66px;font-size:8.4px;line-height:8.4px;font-weight:400;color:#656d6d;">Since 1 week ago</div>
<div class="r" style="left:376.00px;top:738.00px;width:16.60px;height:16.30px;background:#f7f8f8;border-radius:3px;"></div>
<div class="r" style="left:380.90px;top:746.00px;width:1.20px;height:1.20px;background:#7f8787;"></div>
<div class="r" style="left:384.00px;top:746.00px;width:1.20px;height:1.20px;background:#7f8787;"></div>
<div class="r" style="left:387.10px;top:746.00px;width:1.20px;height:1.20px;background:#7f8787;"></div>
<svg class="r" style="left:0;top:0" width="1200" height="858" viewBox="0 0 1200 858"><path d="M103.20 782.50 A68.5 68.5 0 0 1 103.20 919.50 L103.20 882.00 A31 31 0 0 0 103.20 820.00 Z" fill="#c48edb"/><path d="M103.20 919.50 A68.5 68.5 0 0 1 103.20 782.50 L103.20 820.00 A31 31 0 0 0 103.20 882.00 Z" fill="#b1e387"/></svg>
<div class="t" style="left:213.00px;top:772.74px;font-size:7.6px;line-height:7.6px;font-weight:700;color:#4a5252;">SNAKE GAME IDS (6)*</div>
<div class="r" style="left:217.00px;top:796.00px;width:5.40px;height:5.40px;background:#c48edb;border-radius:50%;"></div>
<div class="t" style="left:225.50px;top:794.05px;font-size:9px;line-height:9px;font-weight:400;color:#444d4d;">standard</div>
<div class="t" style="right:863.70px;text-align:right;top:794.39px;font-size:8.6px;line-height:8.6px;font-weight:400;color:#555d5d;">3</div>
<div class="t" style="right:815.80px;text-align:right;top:794.39px;font-size:8.6px;line-height:8.6px;font-weight:400;color:#555d5d;">50 %</div>
<div class="r" style="left:209.20px;top:807.80px;width:184.00px;height:1.00px;background:#e3e6e6;"></div>
<div class="r" style="left:217.00px;top:815.60px;width:5.40px;height:5.40px;background:#b1e387;border-radius:50%;"></div>
<div class="t" style="left:225.50px;top:813.65px;font-size:9px;line-height:9px;font-weight:400;color:#444d4d;">solo</div>
<div class="t" style="right:863.70px;text-align:right;top:813.99px;font-size:8.6px;line-height:8.6px;font-weight:400;color:#555d5d;">3</div>
<div class="t" style="right:815.80px;text-align:right;top:813.99px;font-size:8.6px;line-height:8.6px;font-weight:400;color:#555d5d;">50 %</div>
<div class="t" style="left:417.70px;top:738.77px;font-size:8.5px;line-height:8.5px;font-weight:700;color:#3a4444;">Games per day</div>
<div class="t" style="left:417.70px;top:749.66px;font-size:8.4px;line-height:8.4px;font-weight:400;color:#656d6d;">Since 1 week ago</div>
<div class="r" style="left:768.40px;top:737.30px;width:16.60px;height:16.30px;background:#f7f8f8;border-radius:3px;"></div>
<div class="r" style="left:773.30px;top:745.30px;width:1.20px;height:1.20px;background:#7f8787;"></div>
<div class="r" style="left:776.40px;top:745.30px;width:1.20px;height:1.20px;background:#7f8787;"></div>
<div class="r" style="left:779.50px;top:745.30px;width:1.20px;height:1.20px;background:#7f8787;"></div>
<div class="t" style="left:417.70px;top:770.03px;font-size:8.2px;line-height:8.2px;font-weight:400;color:#8e9494;">6</div>
<svg class="r" style="left:418px;top:780.20px" width="365" height="2"><line x1="0.5" y1="1" x2="365" y2="1" stroke="#d3d8d8" stroke-width="1" stroke-dasharray="1 2.6"/></svg>
<div class="t" style="left:417.70px;top:786.83px;font-size:8.2px;line-height:8.2px;font-weight:400;color:#8e9494;">5</div>
<svg class="r" style="left:418px;top:797.00px" width="365" height="2"><line x1="0.5" y1="1" x2="365" y2="1" stroke="#d3d8d8" stroke-width="1" stroke-dasharray="1 2.6"/></svg>
<div class="t" style="left:417.70px;top:803.63px;font-size:8.2px;line-height:8.2px;font-weight:400;color:#8e9494;">4</div>
<svg class="r" style="left:418px;top:813.80px" width="365" height="2"><line x1="0.5" y1="1" x2="365" y2="1" stroke="#d3d8d8" stroke-width="1" stroke-dasharray="1 2.6"/></svg>
<div class="t" style="left:417.70px;top:820.43px;font-size:8.2px;line-height:8.2px;font-weight:400;color:#8e9494;">3</div>
<svg class="r" style="left:418px;top:830.60px" width="365" height="2"><line x1="0.5" y1="1" x2="365" y2="1" stroke="#d3d8d8" stroke-width="1" stroke-dasharray="1 2.6"/></svg>
<div class="t" style="left:417.70px;top:837.23px;font-size:8.2px;line-height:8.2px;font-weight:400;color:#8e9494;">2</div>
<svg class="r" style="left:418px;top:847.40px" width="365" height="2"><line x1="0.5" y1="1" x2="365" y2="1" stroke="#d3d8d8" stroke-width="1" stroke-dasharray="1 2.6"/></svg>
<svg class="r" style="left:0;top:0" width="1200" height="858" viewBox="0 0 1200 858"><path d="M784.9 781.2 L741 858" stroke="#9d62b8" stroke-width="1.2" fill="none"/></svg>
<div class="t" style="left:809.50px;top:738.77px;font-size:8.5px;line-height:8.5px;font-weight:700;color:#3a4444;">Number of snakes per turn</div>
<div class="t" style="left:809.50px;top:749.66px;font-size:8.4px;line-height:8.4px;font-weight:400;color:#656d6d;">Since 1 week ago</div>
<div class="r" style="left:1160.00px;top:738.00px;width:16.60px;height:16.30px;background:#f7f8f8;border-radius:3px;"></div>
<div class="r" style="left:1164.90px;top:746.00px;width:1.20px;height:1.20px;background:#7f8787;"></div>
<div class="r" style="left:1168.00px;top:746.00px;width:1.20px;height:1.20px;background:#7f8787;"></div>
<div class="r" style="left:1171.10px;top:746.00px;width:1.20px;height:1.20px;background:#7f8787;"></div>
<svg class="r" style="left:0;top:0" width="1200" height="858" viewBox="0 0 1200 858"><path d="M886.70 782.50 A68.5 68.5 0 1 1 848.95 793.84 L869.62 825.13 A31 31 0 1 0 886.70 820.00 Z" fill="#5dd6f0"/><path d="M848.95 793.84 A68.5 68.5 0 0 1 886.70 782.50 L886.70 820.00 A31 31 0 0 0 869.62 825.13 Z" fill="#c8388f"/></svg>
<div class="t" style="left:996.70px;top:772.74px;font-size:7.6px;line-height:7.6px;font-weight:700;color:#4a5252;">TURNS (1.92 K)</div>
<div class="r" style="left:1001.50px;top:796.00px;width:5.40px;height:5.40px;background:#5dd6f0;border-radius:50%;"></div>
<div class="t" style="left:1009.70px;top:794.05px;font-size:9px;line-height:9px;font-weight:400;color:#444d4d;">One</div>
<div class="t" style="right:80.00px;text-align:right;top:794.39px;font-size:8.6px;line-height:8.6px;font-weight:400;color:#555d5d;">1.74 k</div>
<div class="t" style="right:31.80px;text-align:right;top:794.39px;font-size:8.6px;line-height:8.6px;font-weight:400;color:#555d5d;">90.71 %</div>
<div class="r" style="left:993.30px;top:807.80px;width:184.00px;height:1.00px;background:#e3e6e6;"></div>
<div class="r" style="left:1001.50px;top:815.60px;width:5.40px;height:5.40px;background:#c8388f;border-radius:50%;"></div>
<div class="t" style="left:1009.70px;top:813.65px;font-size:9px;line-height:9px;font-weight:400;color:#444d4d;">Two</div>
<div class="t" style="right:80.00px;text-align:right;top:813.99px;font-size:8.6px;line-height:8.6px;font-weight:400;color:#555d5d;">178</div>
<div class="t" style="right:31.80px;text-align:right;top:813.99px;font-size:8.6px;line-height:8.6px;font-weight:400;color:#555d5d;">9.29 %</div>
<div class="r" style="left:0.00px;top:844.80px;width:1200.00px;height:14.00px;background:#f1f3f3;"></div>
</body></html>
